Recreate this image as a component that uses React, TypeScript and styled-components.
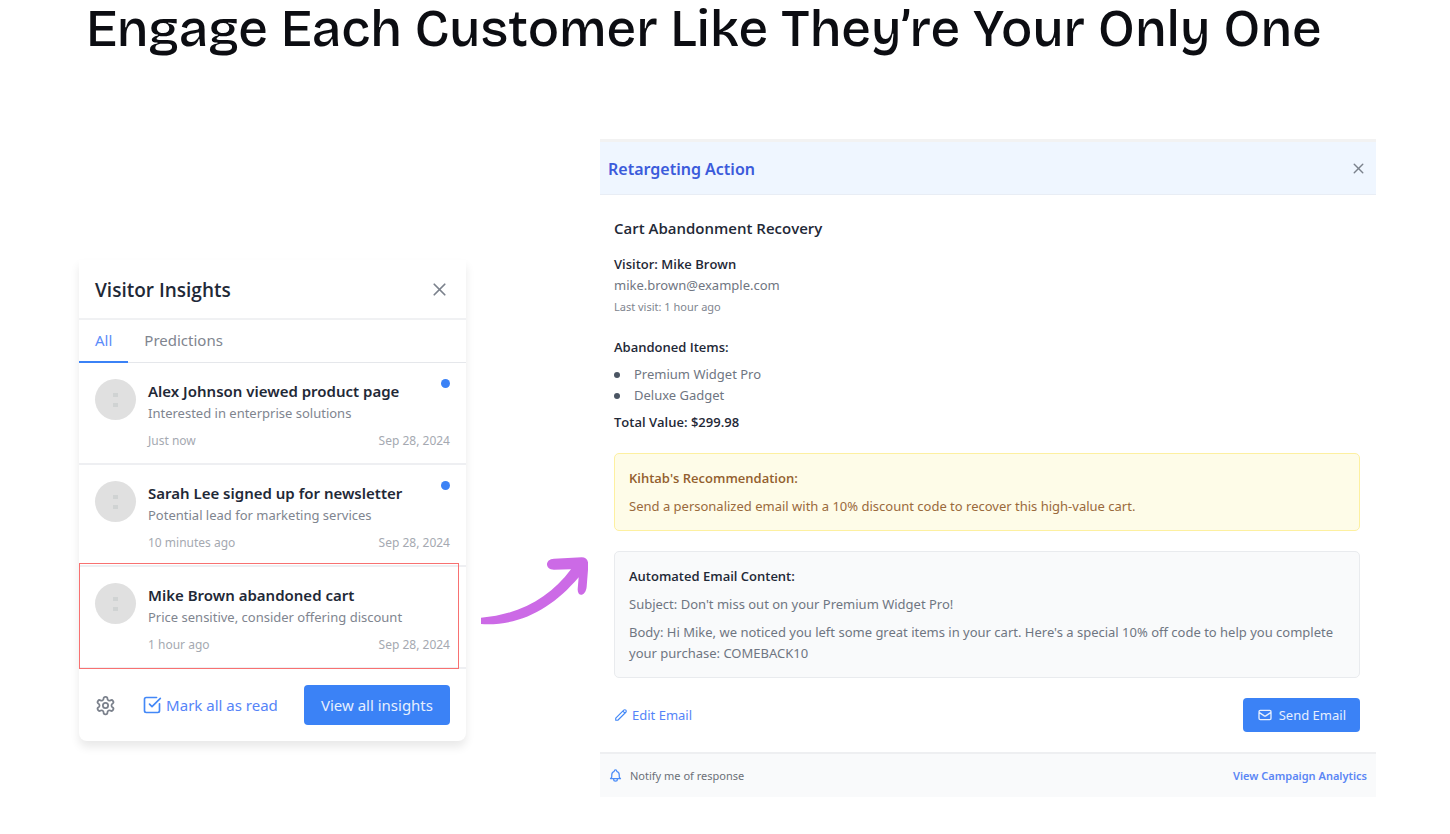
import React from "react";
import styled, { createGlobalStyle } from "styled-components";
import { HiOutlinePencil, HiOutlineBell, HiOutlineMail } from "react-icons/hi";
import { LuSettings, LuX, LuSquareCheckBig } from "react-icons/lu";

const GlobalStyle = createGlobalStyle`
  *, *::before, *::after { box-sizing: border-box; }
  body { margin: 0; background: #fff; color: #1f2937; font-family: "Noto Sans", "Open Sans", sans-serif; font-size: 13px; line-height: 21px; }
  h1, h2, h3, h4, p, ul { margin: 0; padding: 0; }
  button { font: inherit; cursor: pointer; border: 0; padding: 0; background: none; }
  a { text-decoration: none; }
  svg { flex: none; display: block; }
`;

const Page = styled.main`
  padding: 0 74px 36px 79px;
`;

const Headline = styled.h1`
  padding: 0 7px;
  font-family: "Bricolage Grotesque", Inter, sans-serif;
  font-size: 52px;
  line-height: 58px;
  font-weight: 540;
  color: #0c0d12;
`;

const Stage = styled.div`
  display: grid;
  grid-template-columns: minmax(300px, 387fr) 134px minmax(500px, 776fr);
  align-items: start;
  margin-top: 81px;
`;

const Insights = styled.section`
  margin-top: 121px;
  border-radius: 0 0 8px 8px;
  box-shadow: 0 6px 10px rgba(0, 0, 0, 0.09);
`;

const InsightsHeader = styled.header`
  display: flex;
  align-items: center;
  justify-content: space-between;
  height: 60px;
  padding: 1px 16px 0;
  border-bottom: 2px solid #f0f1f3;
`;

const InsightsTitle = styled.h2`
  font: 600 19px/28px "Open Sans", sans-serif;
`;

const IconButton = styled.button`
  display: flex;
  color: #7b818c;
`;

const Tabs = styled.div`
  display: flex;
  height: 43px;
  border-bottom: 1px solid #e5e7eb;
`;

const Tab = styled.button<{ $active?: boolean }>`
  padding: 0 16px;
  height: 43px;
  font-size: 15px;
  color: ${(p) => (p.$active ? "#5b8cfa" : "#80858f")};
  border-bottom: 2px solid ${(p) => (p.$active ? "#3b82f6" : "transparent")};
`;

const Feed = styled.ul`
  list-style: none;
`;

const FeedItem = styled.li<{ $highlighted?: boolean }>`
  position: relative;
  display: grid;
  grid-template-columns: 41px 1fr;
  gap: 12px;
  padding: 16px 16px 12px;
  border-bottom: 2px solid #eeeff2;

  ${(p) =>
    p.$highlighted &&
    `&::after {
      content: "";
      position: absolute;
      inset: -4px 7px -2px 0;
      border: 1px solid #f87171;
      pointer-events: none;
    }`}
`;

const Avatar = styled.span`
  display: grid;
  place-content: center;
  gap: 6px;
  width: 41px;
  height: 41px;
  border-radius: 50%;
  background: #e0e0e0;

  i { width: 5px; height: 4px; background: #d0d3d3; }
`;

const ItemTitle = styled.h3`
  font-size: 15px;
  font-weight: 600;
  line-height: 24px;
`;

const ItemText = styled.p`
  font-size: 13px;
  line-height: 20px;
  color: #80858f;
`;

const ItemMeta = styled.div`
  display: flex;
  justify-content: space-between;
  margin-top: 8px;
  font-size: 12px;
  line-height: 20px;
  color: #a5a9b1;
`;

const UnreadDot = styled.span`
  position: absolute;
  top: 16px;
  right: 16px;
  width: 9px;
  height: 9px;
  border-radius: 50%;
  background: #3b82f6;
`;

const InsightsFooter = styled.footer`
  display: flex;
  align-items: center;
  justify-content: space-between;
  padding: 16px;
`;

const TextButton = styled.button<{ $size: number }>`
  display: flex;
  align-items: center;
  gap: 4px;
  font-size: ${(p) => p.$size}px;
  color: #5584f8;
  svg { color: #4388f7; }
`;

const PrimaryButton = styled.button<{ $large?: boolean }>`
  display: flex;
  align-items: center;
  gap: 6px;
  height: ${(p) => (p.$large ? 40 : 34)}px;
  padding: 0 ${(p) => (p.$large ? 17 : 14)}px;
  border-radius: 4px;
  background: #3b82f6;
  color: #e6effe;
  font-size: ${(p) => (p.$large ? 15 : 13)}px;
`;

const ArrowCell = styled.div`
  padding: 418px 12px 0 15px;
`;

const Panel = styled.section`
  border-top: 3px solid #f2f2f2;
`;

const PanelHeader = styled.header`
  display: flex;
  align-items: center;
  justify-content: space-between;
  height: 53px;
  padding: 1px 9px 0 8px;
  background: #eff6ff;
  border-bottom: 1px solid #e8edf5;
`;

const PanelTitle = styled.h2`
  font-size: 16px;
  line-height: 24px;
  font-weight: 600;
  color: #3b5bdb;
`;

const PanelBody = styled.div`
  padding: 23px 16px 20px 14px;
`;

const PanelHeading = styled.h3`
  font: 600 15px/21px "Open Sans", sans-serif;
`;

const Group = styled.section<{ $top: number }>`
  margin-top: ${(p) => p.$top}px;
`;

const Label = styled.h4`
  font: 600 13px/21px "Open Sans", sans-serif;
`;

const Muted = styled.p`
  color: #6f7682;
`;

const Small = styled.p`
  font-size: 11px;
  color: #80858f;
`;

const ItemList = styled.ul`
  margin: 6px 0;
  list-style: none;
  color: #6f7682;

  li { display: flex; align-items: center; gap: 14px; }
  li::before { content: ""; width: 6px; height: 6px; border-radius: 50%; background: #4b5563; }
`;

const Note = styled.section<{ $tone: "amber" | "gray" }>`
  display: grid;
  gap: 7px;
  margin-top: 20px;
  padding: 14px 14px 13px;
  border: 1px solid ${(p) => (p.$tone === "amber" ? "#fdf0a0" : "#e9ebee")};
  border-radius: 5px;
  background: ${(p) => (p.$tone === "amber" ? "#fefce8" : "#f9fafb")};
  color: ${(p) => (p.$tone === "amber" ? "#9a6a3c" : "#6f7682")};

  h4 { color: ${(p) => (p.$tone === "amber" ? "#935f2e" : "#1f2937")}; }
`;

const Actions = styled.div`
  display: flex;
  align-items: center;
  justify-content: space-between;
  margin-top: 20px;
`;

const PanelFooter = styled.footer`
  display: flex;
  align-items: center;
  justify-content: space-between;
  height: 45px;
  padding: 0 9px 0 8px;
  border-top: 2px solid #eeeff1;
  background: #f9fafb;
  font-size: 11px;
`;

const Notify = styled.button`
  display: flex;
  align-items: center;
  gap: 7px;
  color: #6b7078;
  svg { color: #4c8df8; }
`;

const AnalyticsLink = styled.a`
  font-weight: 600;
  color: #5b86f5;
`;

const insights = [
  { title: "Alex Johnson viewed product page", text: "Interested in enterprise solutions", time: "Just now", unread: true },
  { title: "Sarah Lee signed up for newsletter", text: "Potential lead for marketing services", time: "10 minutes ago", unread: true },
  { title: "Mike Brown abandoned cart", text: "Price sensitive, consider offering discount", time: "1 hour ago", highlighted: true },
];

export default function App() {
  return (
    <Page>
      <GlobalStyle />
      <Headline>Engage Each Customer Like They’re Your Only One</Headline>
      <Stage>
        <Insights>
          <InsightsHeader>
            <InsightsTitle>Visitor Insights</InsightsTitle>
            <IconButton aria-label="Close insights"><LuX size={21} /></IconButton>
          </InsightsHeader>
          <Tabs>
            <Tab $active>All</Tab>
            <Tab>Predictions</Tab>
          </Tabs>
          <Feed>
            {insights.map((item) => (
              <FeedItem key={item.title} $highlighted={item.highlighted}>
                <Avatar aria-hidden><i /><i /></Avatar>
                <div>
                  <ItemTitle>{item.title}</ItemTitle>
                  <ItemText>{item.text}</ItemText>
                  <ItemMeta><span>{item.time}</span><time>Sep 28, 2024</time></ItemMeta>
                </div>
                {item.unread && <UnreadDot />}
              </FeedItem>
            ))}
          </Feed>
          <InsightsFooter>
            <IconButton aria-label="Settings"><LuSettings size={21} /></IconButton>
            <TextButton $size={15}><LuSquareCheckBig size={20} />Mark all as read</TextButton>
            <PrimaryButton $large>View all insights</PrimaryButton>
          </InsightsFooter>
        </Insights>
        <ArrowCell>
          <svg width="107" height="68" viewBox="33 49 321 204" fill="#cc6ae6" aria-hidden>
            <path d="M33 231 C150 222 240 170 303 86 L252 87 C224 87 224 55 252 54 L335 50 Q355 50 355 75 L350 138 C347 168 322 170 323 145 L326 110 C245 205 150 257 33 250 Z" />
          </svg>
        </ArrowCell>
        <Panel>
          <PanelHeader>
            <PanelTitle>Retargeting Action</PanelTitle>
            <IconButton aria-label="Close panel"><LuX size={17} /></IconButton>
          </PanelHeader>
          <PanelBody>
            <PanelHeading>Cart Abandonment Recovery</PanelHeading>
            <Group $top={15}>
              <Label>Visitor: Mike Brown</Label>
              <Muted>mike.brown@example.com</Muted>
              <Small>Last visit: 1 hour ago</Small>
            </Group>
            <Group $top={20}>
              <Label>Abandoned Items:</Label>
              <ItemList>
                <li>Premium Widget Pro</li>
                <li>Deluxe Gadget</li>
              </ItemList>
              <Label as="p">Total Value: $299.98</Label>
            </Group>
            <Note $tone="amber">
              <Label>Kihtab's Recommendation:</Label>
              <p>Send a personalized email with a 10% discount code to recover this high-value cart.</p>
            </Note>
            <Note $tone="gray">
              <Label>Automated Email Content:</Label>
              <p>Subject: Don't miss out on your Premium Widget Pro!</p>
              <p>Body: Hi Mike, we noticed you left some great items in your cart. Here's a special 10% off code to help you complete your purchase: COMEBACK10</p>
            </Note>
            <Actions>
              <TextButton $size={13}><HiOutlinePencil size={14} />Edit Email</TextButton>
              <PrimaryButton><HiOutlineMail size={16} />Send Email</PrimaryButton>
            </Actions>
          </PanelBody>
          <PanelFooter>
            <Notify><HiOutlineBell size={15} />Notify me of response</Notify>
            <AnalyticsLink href="#analytics">View Campaign Analytics</AnalyticsLink>
          </PanelFooter>
        </Panel>
      </Stage>
    </Page>
  );
}
